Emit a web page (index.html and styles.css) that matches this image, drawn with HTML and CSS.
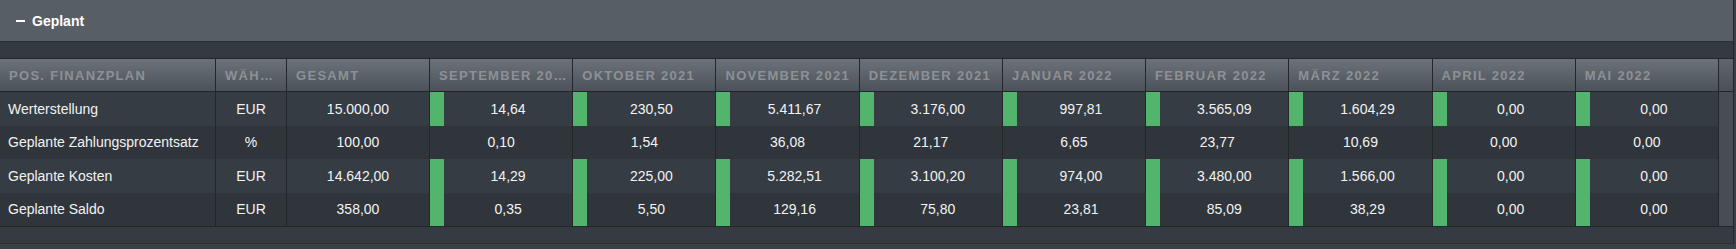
FILE: index.html
```html
<!DOCTYPE html>
<html lang="de">
<head>
<meta charset="utf-8">
<title>Geplant</title>
<link rel="stylesheet" href="styles.css">
</head>
<body>
<div class="panel">
  <div class="panel-head"><span class="minus"></span><span class="title">Geplant</span></div>
  <div class="strip"></div>
  <div class="table">
    <div class="row head">
      <div class="h">Pos. Finanzplan</div>
      <div class="h">Währung</div>
      <div class="h">Gesamt</div>
      <div class="h">September 2021</div>
      <div class="h">Oktober 2021</div>
      <div class="h">November 2021</div>
      <div class="h">Dezember 2021</div>
      <div class="h">Januar 2022</div>
      <div class="h">Februar 2022</div>
      <div class="h">März 2022</div>
      <div class="h">April 2022</div>
      <div class="h">Mai 2022</div>
      <div class="sb"></div>
    </div>
    <div class="row body odd">
      <div class="c name">Werterstellung</div>
      <div class="c mid">EUR</div>
      <div class="c mid">15.000,00</div>
      <div class="c bar"><span class="g"></span><span class="v">14,64</span></div>
      <div class="c bar"><span class="g"></span><span class="v">230,50</span></div>
      <div class="c bar"><span class="g"></span><span class="v">5.411,67</span></div>
      <div class="c bar"><span class="g"></span><span class="v">3.176,00</span></div>
      <div class="c bar"><span class="g"></span><span class="v">997,81</span></div>
      <div class="c bar"><span class="g"></span><span class="v">3.565,09</span></div>
      <div class="c bar"><span class="g"></span><span class="v">1.604,29</span></div>
      <div class="c bar"><span class="g"></span><span class="v">0,00</span></div>
      <div class="c bar"><span class="g"></span><span class="v">0,00</span></div>
      <div class="sb"></div>
    </div>
    <div class="row body even">
      <div class="c name">Geplante Zahlungsprozentsatz</div>
      <div class="c mid">%</div>
      <div class="c mid">100,00</div>
      <div class="c mid">0,10</div>
      <div class="c mid">1,54</div>
      <div class="c mid">36,08</div>
      <div class="c mid">21,17</div>
      <div class="c mid">6,65</div>
      <div class="c mid">23,77</div>
      <div class="c mid">10,69</div>
      <div class="c mid">0,00</div>
      <div class="c mid">0,00</div>
      <div class="sb"></div>
    </div>
    <div class="row body odd">
      <div class="c name">Geplante Kosten</div>
      <div class="c mid">EUR</div>
      <div class="c mid">14.642,00</div>
      <div class="c bar"><span class="g"></span><span class="v">14,29</span></div>
      <div class="c bar"><span class="g"></span><span class="v">225,00</span></div>
      <div class="c bar"><span class="g"></span><span class="v">5.282,51</span></div>
      <div class="c bar"><span class="g"></span><span class="v">3.100,20</span></div>
      <div class="c bar"><span class="g"></span><span class="v">974,00</span></div>
      <div class="c bar"><span class="g"></span><span class="v">3.480,00</span></div>
      <div class="c bar"><span class="g"></span><span class="v">1.566,00</span></div>
      <div class="c bar"><span class="g"></span><span class="v">0,00</span></div>
      <div class="c bar"><span class="g"></span><span class="v">0,00</span></div>
      <div class="sb"></div>
    </div>
    <div class="row body even">
      <div class="c name">Geplante Saldo</div>
      <div class="c mid">EUR</div>
      <div class="c mid">358,00</div>
      <div class="c bar"><span class="g"></span><span class="v">0,35</span></div>
      <div class="c bar"><span class="g"></span><span class="v">5,50</span></div>
      <div class="c bar"><span class="g"></span><span class="v">129,16</span></div>
      <div class="c bar"><span class="g"></span><span class="v">75,80</span></div>
      <div class="c bar"><span class="g"></span><span class="v">23,81</span></div>
      <div class="c bar"><span class="g"></span><span class="v">85,09</span></div>
      <div class="c bar"><span class="g"></span><span class="v">38,29</span></div>
      <div class="c bar"><span class="g"></span><span class="v">0,00</span></div>
      <div class="c bar"><span class="g"></span><span class="v">0,00</span></div>
      <div class="sb"></div>
    </div>
  </div>
  <div class="foot"></div>
</div>
</body>
</html>
```
FILE: styles.css
```css
html, body {
  margin: 0;
  padding: 0;
}
body {
  background: #3b4047;
  font-family: "Liberation Sans", Arial, sans-serif;
  color: #f2f2f2;
}
.panel {
  width: 1733px;
  border-right: 1px solid #23272c;
}
.panel-head {
  height: 41px;
  background: #585e66;
  border-bottom: 1px solid #2a2e33;
  display: flex;
  align-items: center;
  padding-left: 16px;
  gap: 7px;
  color: #ffffff;
  font-weight: bold;
  font-size: 14px;
}
.minus {
  width: 9px;
  height: 2px;
  background: #ffffff;
}
.strip {
  height: 16px;
  background: #353a41;
}
.table {
  border-top: 1px solid #23272c;
  border-bottom: 1px solid #23272c;
}
.row {
  display: grid;
  grid-template-columns: 215px 70px 142px repeat(9, 1fr) 14px;
  column-gap: 1px;
  background: #23272c;
}
.row.head {
  height: 32px;
  border-bottom: 1px solid #23272c;
}
.h {
  background: linear-gradient(#6c727a, #4c5259);
  color: #8d9196;
  font-weight: bold;
  font-size: 13px;
  letter-spacing: 1.3px;
  text-transform: uppercase;
  line-height: 33px;
  padding: 0 4px 0 9px;
  white-space: nowrap;
  overflow: hidden;
  text-overflow: ellipsis;
}
.row.head .sb {
  background: linear-gradient(#60666e, #4a5057);
}
.row.body {
  height: 33.5px;
  font-size: 14px;
}
.row.odd .c {
  background: #363c43;
}
.row.even .c {
  background: #30353b;
}
.sb {
  background: #474d55;
}
.c {
  display: flex;
  align-items: center;
  overflow: hidden;
  white-space: nowrap;
}
.c.name {
  padding-left: 8px;
}
.c.mid {
  justify-content: center;
}
.c.bar {
  align-items: stretch;
}
.g {
  width: 14px;
  flex: none;
  background: #53b46e;
}
.v {
  flex: 1;
  display: flex;
  align-items: center;
  justify-content: center;
}
.foot {
  height: 16px;
  background: #363b42;
  border-bottom: 1px solid #2a2e33;
}
```
